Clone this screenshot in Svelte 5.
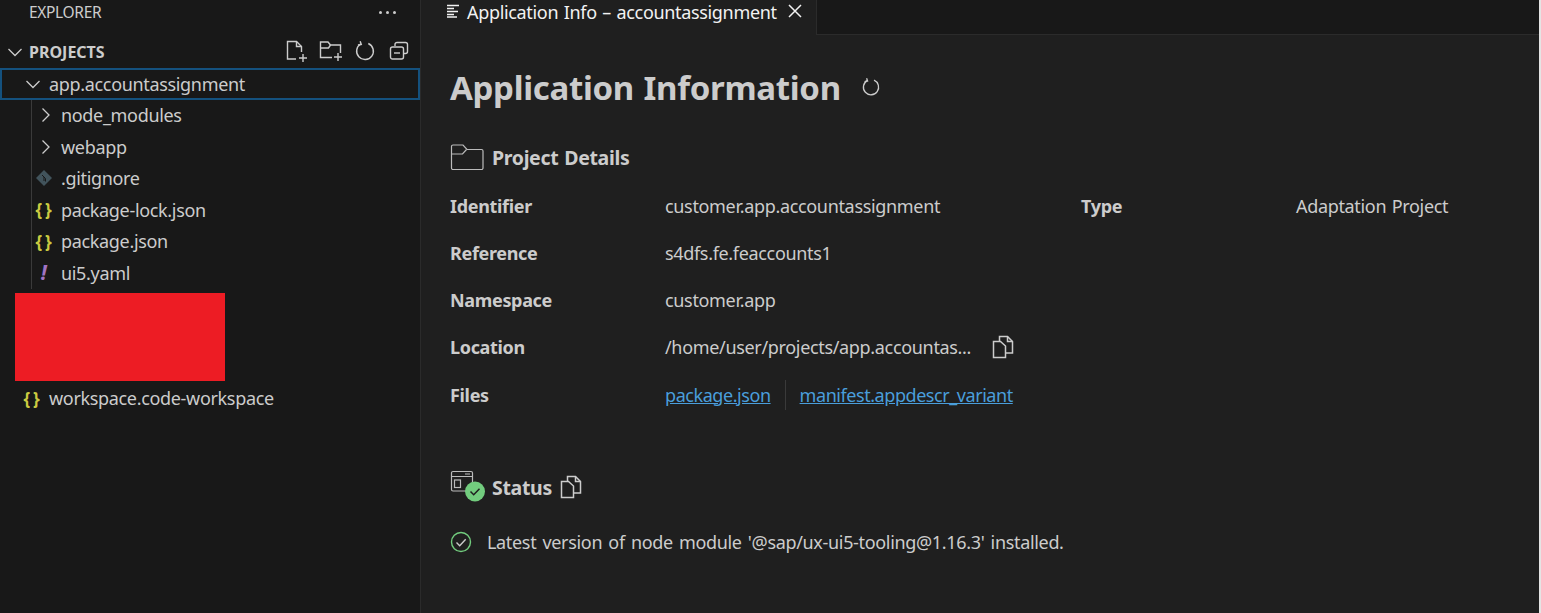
<script>
	const tree = [
		{ name: 'node_modules', icon: 'chevron' },
		{ name: 'webapp', icon: 'chevron' },
		{ name: '.gitignore', icon: 'git' },
		{ name: 'package-lock.json', icon: 'json' },
		{ name: 'package.json', icon: 'json' },
		{ name: 'ui5.yaml', icon: 'yaml' }
	];
</script>

{#snippet refresh(size)}
	<svg width={size} height={size} viewBox="0 0 20 20" fill="none" stroke="currentColor" stroke-width="1.3">
		<path d="M6.2 3.6A7.6 7.6 0 1 0 13 3.2" />
		<path d="M5.6 1.2 L6.6 4 L3.6 4.6" />
	</svg>
{/snippet}

{#snippet copy()}
	<svg class="copy" width="22" height="24" viewBox="0 0 22 24" fill="none" stroke="currentColor" stroke-width="1.5">
		<path d="M7.5 6.5V1.5h8l5 5v11.5h-7" />
		<path d="M15.5 1.5v5h5" />
		<path d="M1.5 6.5h7l5 4.5v11.5h-12z" />
	</svg>
{/snippet}

<div class="window">
	<!-- Explorer sidebar -->
	<aside class="sidebar">
		<header class="explorer-title">
			<span>EXPLORER</span>
			<span class="dots"><i></i><i></i><i></i></span>
		</header>

		<div class="section">
			<svg class="chev" width="16" height="16" viewBox="0 0 16 16" fill="none" stroke="currentColor" stroke-width="1.3"><path d="M1.5 5l6.5 6.5L14.5 5" /></svg>
			<span>PROJECTS</span>
			<div class="actions">
				<svg width="24" height="24" viewBox="0 0 24 24" fill="none" stroke="currentColor" stroke-width="1.4">
					<path d="M12 20H3.5V2.5h9l5 5V13" /><path d="M12.5 2.5v5h5" /><path d="M19 15v8M15 19h8" />
				</svg>
				<svg width="26" height="24" viewBox="0 0 26 24" fill="none" stroke="currentColor" stroke-width="1.4">
					<path d="M14 18.5H2.5V3h7.5l2.5 3h10v8" /><path d="M2.5 9h8l2-3" /><path d="M20 14v8M16 18h8" />
				</svg>
				<span class="action-refresh">{@render refresh(22)}</span>
				<svg width="20" height="20" viewBox="0 0 20 20" fill="none" stroke="currentColor" stroke-width="1.4">
					<path d="M6 5V3.5A2 2 0 0 1 8 1.5h8.5a2 2 0 0 1 2 2v7a2 2 0 0 1-2 2H15" />
					<rect x="1.5" y="6" width="13" height="12" rx="2" /><path d="M5 12h6" />
				</svg>
			</div>
		</div>

		<div class="row root">
			<svg class="chev" width="16" height="16" viewBox="0 0 16 16" fill="none" stroke="currentColor" stroke-width="1.3"><path d="M1.5 5l6.5 6.5L14.5 5" /></svg>
			<span>app.accountassignment</span>
		</div>

		<div class="children">
			{#each tree as item}
				<div class="row child">
					<span class="tree-icon">
						{#if item.icon === 'chevron'}
							<svg width="14" height="16" viewBox="0 0 14 16" fill="none" stroke="currentColor" stroke-width="1.3"><path d="M5.5 1.5 L12 8 L5.5 14.5" /></svg>
						{:else if item.icon === 'git'}
							<svg width="18" height="18" viewBox="0 0 18 18"><path d="M9 1 17 9 9 17 1 9z" fill="#41535b" /><path d="M7 6l3.500 3.500v3M9 8v4" stroke="#181818" stroke-width="1" fill="none" /></svg>
						{:else if item.icon === 'json'}
							<span class="json">{'{ }'}</span>
						{:else}
							<span class="yaml">!</span>
						{/if}
					</span>
					<span>{item.name}</span>
				</div>
			{/each}
		</div>

		<div class="redacted"></div>

		<div class="row workspace">
			<span class="tree-icon"><span class="json">{'{ }'}</span></span>
			<span>workspace.code-workspace</span>
		</div>
	</aside>

	<main class="editor">
		<div class="tabs">
			<div class="tab">
				<svg width="14" height="14" viewBox="0 0 14 14" stroke="currentColor" stroke-width="1.3"><path d="M1 1.5h12M1 4.5h7M1 7.5h11M1 10.5h7M1 13h10" /></svg>
				<span>Application Info – accountassignment</span>
				<svg class="close" width="14" height="14" viewBox="0 0 14 14" stroke="currentColor" stroke-width="1.5"><path d="M1 1l12 12M13 1L1 13" /></svg>
			</div>
		</div>

		<div class="page">
			<div class="title-row">
				<h1>Application Information</h1>
				{@render refresh(20)}
			</div>

			<h2 class="project-heading">
				<svg width="34" height="28" viewBox="0 0 34 28" fill="none" stroke="#bbb" stroke-width="1.2">
					<path d="M1.5 25V3.5A1.5 1.5 0 0 1 3 2h10l4 4.5h14.5a1.5 1.5 0 0 1 1.5 1.5v17a1.5 1.5 0 0 1-1.5 1.5H3A1.5 1.5 0 0 1 1.5 25z" />
					<path d="M1.5 11h11l4-4.5" />
				</svg>
				Project Details
			</h2>

			<div class="details">
				<div class="label">Identifier</div>
				<div>customer.app.accountassignment</div>
				<div class="label">Type</div>
				<div>Adaptation Project</div>

				<div class="label first">Reference</div>
				<div>s4dfs.fe.feaccounts1</div>

				<div class="label first">Namespace</div>
				<div>customer.app</div>

				<div class="label first">Location</div>
				<div class="location">/home/user/projects/app.accountas... {@render copy()}</div>

				<div class="label first">Files</div>
				<div class="files">
					<a href="#package">package.json</a>
					<span class="sep"></span>
					<a href="#manifest">manifest.appdescr_variant</a>
				</div>
			</div>

			<h2 class="status-heading">
				<svg width="36" height="34" viewBox="0 0 36 34" fill="none" stroke="#bbb" stroke-width="1.2">
					<path d="M19 21H3a1.5 1.5 0 0 1-1.5-1.5V3A1.5 1.5 0 0 1 3 1.5h18a1.5 1.5 0 0 1 1.5 1.5v9" />
					<path d="M1.5 6.5h21M15 4h5" />
					<rect x="4.5" y="10" width="6" height="7.5" />
					<circle cx="25" cy="21.5" r="10" fill="#72cc7e" stroke="none" />
					<path d="M20.5 21.5l3.2 3.2 5.8-6" stroke="#1f1f1f" stroke-width="1.5" />
				</svg>
				Status
				{@render copy()}
			</h2>

			<div class="status-line">
				<svg width="22" height="22" viewBox="0 0 22 22" fill="none" stroke="#72cc7e" stroke-width="1.4">
					<circle cx="11" cy="11" r="9.5" />
					<path d="M6.5 11.5l3.2 3.2 6-6.5" stroke="#cccccc" />
				</svg>
				<span>Latest version of node module '@sap/ux-ui5-tooling@1.16.3' installed.</span>
			</div>
		</div>
	</main>
</div>

<style>
	:global(body) {
		background: #181818;
		overflow: hidden;
	}

	.window {
		display: flex;
		width: 1541px;
		height: 613px;
		box-sizing: border-box;
		color: #cccccc;
		font-family: 'Noto Sans', 'Open Sans', sans-serif;
		font-size: 18px;
		letter-spacing: -0.33px;
		word-spacing: 1.2px;
		border-right: 2px solid #e4e4e4;
		overflow: hidden;
	}

	/* Sidebar */
	.sidebar {
		width: 421px;
		flex: none;
		box-sizing: border-box;
		background: #181818;
		border-right: 1px solid #2b2b2b;
	}

	.explorer-title {
		display: flex;
		align-items: center;
		justify-content: space-between;
		height: 24px;
		padding: 0 24px 0 29px;
		font-size: 15.5px;
	}

	.dots {
		display: flex;
		gap: 4px;
	}

	.dots i {
		width: 3px;
		height: 3px;
		border-radius: 50%;
		background: #cccccc;
	}

	.section {
		display: flex;
		align-items: center;
		height: 44px;
		padding: 12px 11px 0 7px;
		box-sizing: border-box;
		font-weight: 700;
		font-size: 16px;
		letter-spacing: 0;
	}

	.section .chev {
		margin-right: 6px;
	}

	.actions {
		display: flex;
		align-items: center;
		gap: 10px;
		margin-left: auto;
		margin-top: -2px;
	}

	.action-refresh {
		display: flex;
		margin-right: 3px;
	}

	.row {
		display: flex;
		align-items: center;
		height: 31.5px;
		box-sizing: border-box;
		white-space: nowrap;
	}

	.root {
		padding-left: 23px;
		gap: 8px;
		border: 2px solid #14517e;
	}

	.children {
		margin-left: 31px;
		border-left: 1px solid #3a3a3a;
	}

	.child {
		padding-left: 1px;
	}

	.tree-icon {
		display: flex;
		align-items: center;
		justify-content: center;
		width: 21px;
		margin-right: 7px;
	}

	.json {
		color: #cbcb41;
		font-size: 17px;
		font-weight: 700;
		white-space: nowrap;
		word-spacing: -1px;
	}

	.yaml {
		color: #a074c4;
		font-size: 21px;
		font-weight: 700;
		font-style: italic;
		line-height: 1;
	}

	.redacted {
		width: 210px;
		height: 88px;
		margin: 4px 0 2px 15px;
		background: #ed1c24;
	}

	.workspace {
		padding-left: 21px;
	}

	/* Editor */
	.editor {
		flex: 1;
		min-width: 0;
		background: #1f1f1f;
	}

	.tabs {
		height: 35px;
		background: #181818;
		border-bottom: 1px solid #2b2b2b;
		box-sizing: border-box;
	}

	.tab {
		display: flex;
		align-items: flex-start;
		width: 396px;
		height: 35px;
		box-sizing: border-box;
		padding: 0 14px 0 25px;
		background: #1f1f1f;
		border-right: 1px solid #2b2b2b;
		color: #f2f2f2;
		white-space: nowrap;
	}

	.tab svg {
		flex: none;
		margin-top: 4px;
	}

	.tab span {
		margin-left: 7px;
	}

	.tab .close {
		margin-left: auto;
		margin-top: 4px;
	}

	.page {
		padding: 0 29px;
	}

	.title-row {
		display: flex;
		align-items: center;
		gap: 20px;
		height: 50px;
		margin-top: 27px;
	}

	h1 {
		margin: 0;
		font-size: 33px;
		font-weight: 700;
		letter-spacing: -0.3px;
	}

	h2 {
		display: flex;
		align-items: center;
		margin: 0;
		font-size: 19.5px;
		font-weight: 700;
	}

	.project-heading {
		gap: 8px;
		margin-top: 30px;
		height: 30px;
	}

	.details {
		display: grid;
		grid-template-columns: 215px 416px 215px 1fr;
		grid-auto-rows: 47.25px;
		align-items: center;
		margin-top: 10px;
	}

	.label {
		font-weight: 700;
	}

	.first {
		grid-column: 1;
	}

	.location {
		display: flex;
		align-items: center;
		gap: 21px;
		white-space: nowrap;
	}

	.copy {
		flex: none;
	}

	.files {
		display: flex;
		align-items: center;
		gap: 14px;
		letter-spacing: -0.44px;
	}

	.files a {
		color: #4a9edb;
	}

	.sep {
		width: 1px;
		height: 30px;
		background: #3a3a3a;
	}

	.status-heading {
		margin-top: 51px;
		height: 36px;
		gap: 6px;
	}

	.status-heading .copy {
		margin-left: 2px;
	}

	.status-line {
		display: flex;
		align-items: center;
		gap: 15px;
		margin-top: 25px;
		word-spacing: 1.8px;
	}
</style>
